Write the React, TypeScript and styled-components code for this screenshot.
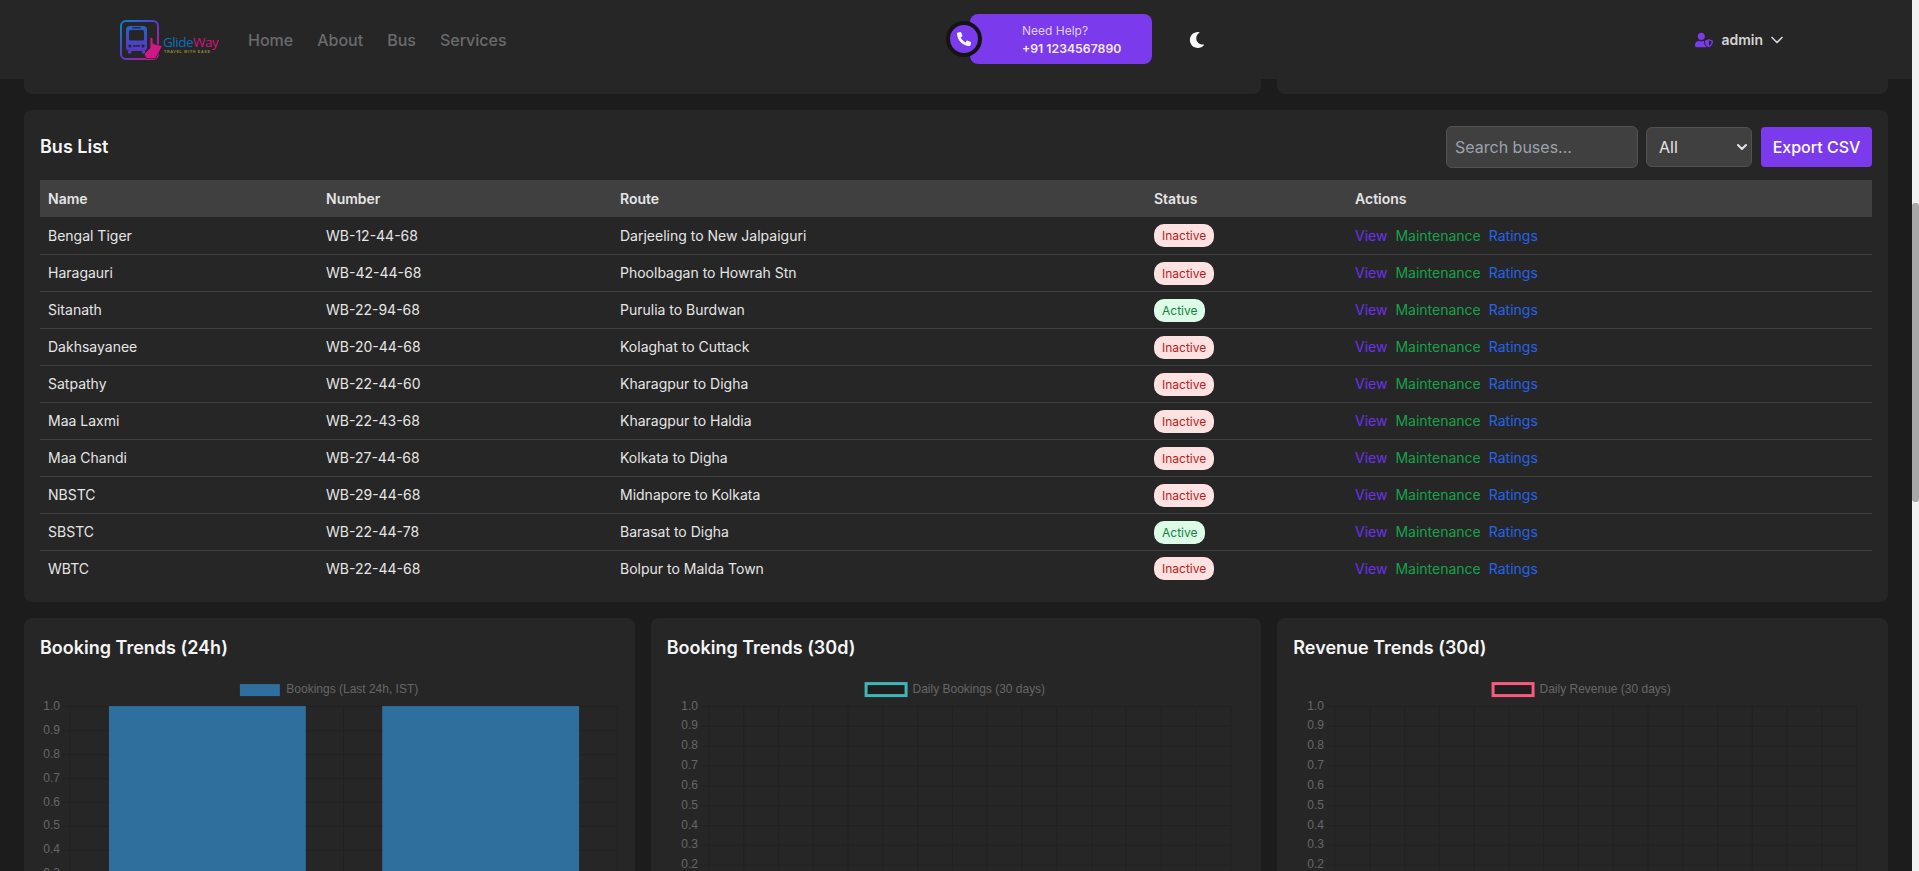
import React from "react";
import styled, { createGlobalStyle } from "styled-components";
import { FaMoon, FaPhoneAlt, FaUserShield } from "react-icons/fa";
import { FiChevronDown } from "react-icons/fi";

const GlobalStyle = createGlobalStyle`
  html, body {
    margin: 0;
    height: 100%;
    overflow: hidden;
    background: #1c1c1c;
  }
  * {
    box-sizing: border-box;
  }
`;

const buses = [
  { name: "Bengal Tiger", number: "WB-12-44-68", route: "Darjeeling to New Jalpaiguri", active: false },
  { name: "Haragauri", number: "WB-42-44-68", route: "Phoolbagan to Howrah Stn", active: false },
  { name: "Sitanath", number: "WB-22-94-68", route: "Purulia to Burdwan", active: true },
  { name: "Dakhsayanee", number: "WB-20-44-68", route: "Kolaghat to Cuttack", active: false },
  { name: "Satpathy", number: "WB-22-44-60", route: "Kharagpur to Digha", active: false },
  { name: "Maa Laxmi", number: "WB-22-43-68", route: "Kharagpur to Haldia", active: false },
  { name: "Maa Chandi", number: "WB-27-44-68", route: "Kolkata to Digha", active: false },
  { name: "NBSTC", number: "WB-29-44-68", route: "Midnapore to Kolkata", active: false },
  { name: "SBSTC", number: "WB-22-44-78", route: "Barasat to Digha", active: true },
  { name: "WBTC", number: "WB-22-44-68", route: "Bolpur to Malda Town", active: false },
];

const ticks = ["1.0", "0.9", "0.8", "0.7", "0.6", "0.5", "0.4", "0.3", "0.2", "0.1", "0.0"];

function Logo() {
  return (
    <svg width="100" height="42" viewBox="0 0 100 42">
      <defs>
        <linearGradient id="logoFrame" x1="0" y1="0" x2="1" y2="1">
          <stop offset="0" stopColor="#0a84c8" />
          <stop offset="0.5" stopColor="#5b3bd0" />
          <stop offset="1" stopColor="#d9117f" />
        </linearGradient>
        <linearGradient id="logoBus" x1="0" y1="0" x2="0" y2="1">
          <stop offset="0" stopColor="#2a62c8" />
          <stop offset="1" stopColor="#5a35c8" />
        </linearGradient>
      </defs>
      <rect x="2" y="2" width="37" height="38" rx="5" fill="none" stroke="url(#logoFrame)" strokeWidth="2" />
      <rect x="7" y="7" width="21" height="25" rx="4" fill="url(#logoBus)" />
      <rect x="10" y="11" width="15" height="10.5" rx="1.5" fill="#262626" />
      <rect x="13" y="8.2" width="9" height="1.4" rx="0.7" fill="#262626" />
      <circle cx="11" cy="27" r="1.6" fill="#262626" />
      <circle cx="24" cy="27" r="1.6" fill="#262626" />
      <rect x="14" y="26.3" width="7" height="1.4" fill="#262626" />
      <rect x="9" y="32" width="3.5" height="2.5" rx="1" fill="#4a48c8" />
      <rect x="23" y="32" width="3.5" height="2.5" rx="1" fill="#4a48c8" />
      <path d="M31 18 L34 19 L34 24.5 L43.5 27 L36.5 39.5 L27 39.5 L25 35 L31 29 Z" fill="#cf1786" stroke="#262626" strokeWidth="0.8" />
      <text x="44" y="27.5" fontFamily="'Open Sans', sans-serif" fontSize="13.5" fontWeight="500" letterSpacing="-0.5" fill="#0a70c4">
        Glide
        <tspan fill="#d4147e">Way</tspan>
      </text>
      <text x="45" y="34" fontFamily="'Liberation Sans', sans-serif" fontSize="3.6" fontWeight="700" letterSpacing="0.72" fill="#a8843c">
        TRAVEL WITH EASE
      </text>
    </svg>
  );
}

type ChartProps = {
  title: string;
  legend: string;
  swatch: string;
  swatchX: number;
  textX: number;
  left: number;
  right: number;
  labelEnd: number;
  step: number;
  columns: number;
  bars?: [number, number][];
  filled?: boolean;
};

function ChartCard({ title, legend, swatch, swatchX, textX, left, right, labelEnd, step, columns, bars, filled }: ChartProps) {
  const top = 32;
  const bottom = top + step * 10;
  const colWidth = (right - left) / columns;
  return (
    <Card>
      <CardTitle>{title}</CardTitle>
      <ChartSvg viewBox="0 0 579 300">
        {filled ? (
          <rect x={swatchX} y={10} width={40} height={12} fill={swatch} />
        ) : (
          <rect x={swatchX} y={9.5} width={40} height={12} fill="#1e1e1e" stroke={swatch} strokeWidth={3} />
        )}
        <ChartText x={textX} y={19}>
          {legend}
        </ChartText>
        {ticks.map((t, i) => (
          <React.Fragment key={t}>
            <GridLine x1={left - 8} x2={right} y1={top + i * step + 0.5} y2={top + i * step + 0.5} />
            <ChartText x={labelEnd} y={top + i * step + 3.5} textAnchor="end">
              {t}
            </ChartText>
          </React.Fragment>
        ))}
        {Array.from({ length: columns + 1 }, (_, i) => (
          <GridLine key={i} x1={left + i * colWidth} x2={left + i * colWidth} y1={top} y2={bottom + 8} />
        ))}
        {bars?.map(([x, w]) => (
          <rect key={x} x={x} y={top} width={w} height={bottom - top} fill="#2f6f9e" />
        ))}
      </ChartSvg>
    </Card>
  );
}

export default function App() {
  return (
    <>
      <GlobalStyle />
      <Shell>
        <Page>
          <Header>
            <LeftGroup>
              <Logo />
              <Nav>
                <NavLink>Home</NavLink>
                <NavLink>About</NavLink>
                <NavLink>Bus</NavLink>
                <NavLink>Services</NavLink>
              </Nav>
            </LeftGroup>
            <Help>
              <PhoneRing>
                <FaPhoneAlt size={14} />
              </PhoneRing>
              <HelpPill>
                <HelpLabel>Need Help?</HelpLabel>
                <HelpNumber>+91 1234567890</HelpNumber>
              </HelpPill>
            </Help>
            <ThemeToggle>
              <FaMoon size={16} />
            </ThemeToggle>
            <UserMenu>
              <FaUserShield size={18} color="#7c3aed" />
              <UserName>admin</UserName>
              <UserChevron>
                <FiChevronDown size={20} />
              </UserChevron>
            </UserMenu>
          </Header>
          <Content>
            <ThreeCols>
              <ClippedCard $span={2} />
              <ClippedCard $span={1} />
            </ThreeCols>
            <Card>
              <ListHead>
                <ListTitle>Bus List</ListTitle>
                <Tools>
                  <SearchInput placeholder="Search buses..." />
                  <SelectWrap>
                    <StatusSelect defaultValue="All">
                      <option>All</option>
                      <option>Active</option>
                      <option>Inactive</option>
                    </StatusSelect>
                    <SelectArrow>
                      <FiChevronDown size={16} strokeWidth={3} />
                    </SelectArrow>
                  </SelectWrap>
                  <ExportButton>Export CSV</ExportButton>
                </Tools>
              </ListHead>
              <Table>
                <thead>
                  <tr>
                    <Th $w={278}>Name</Th>
                    <Th $w={294}>Number</Th>
                    <Th $w={534}>Route</Th>
                    <Th $w={201}>Status</Th>
                    <Th>Actions</Th>
                  </tr>
                </thead>
                <tbody>
                  {buses.map((b) => (
                    <Row key={b.number}>
                      <Td>{b.name}</Td>
                      <Td>{b.number}</Td>
                      <Td>{b.route}</Td>
                      <Td>
                        <Badge $active={b.active}>{b.active ? "Active" : "Inactive"}</Badge>
                      </Td>
                      <Td>
                        <ActionLink $color="#6d32ee">View</ActionLink>
                        <ActionLink $color="#16a34a">Maintenance</ActionLink>
                        <ActionLink $color="#2563eb">Ratings</ActionLink>
                      </Td>
                    </Row>
                  ))}
                </tbody>
              </Table>
            </Card>
            <ThreeCols>
              <ChartCard
                title="Booking Trends (24h)"
                legend="Bookings (Last 24h, IST)"
                swatch="#2f6f9e"
                swatchX={200}
                textX={246.5}
                left={30}
                right={577.5}
                labelEnd={20}
                step={24}
                columns={2}
                bars={[
                  [69, 197],
                  [342.4, 197],
                ]}
                filled
              />
              <ChartCard
                title="Booking Trends (30d)"
                legend="Daily Bookings (30 days)"
                swatch="#3fb5b5"
                swatchX={199.2}
                textX={245.7}
                left={42}
                right={564}
                labelEnd={31}
                step={19.85}
                columns={15}
              />
              <ChartCard
                title="Revenue Trends (30d)"
                legend="Daily Revenue (30 days)"
                swatch="#f7597f"
                swatchX={200.2}
                textX={246.7}
                left={42}
                right={564}
                labelEnd={31}
                step={19.85}
                columns={15}
              />
            </ThreeCols>
          </Content>
        </Page>
        <ScrollTrack>
          <ScrollThumb />
        </ScrollTrack>
      </Shell>
    </>
  );
}

const Shell = styled.div`
  display: flex;
  height: 871px;
  overflow: hidden;
  font-family: Inter, "Liberation Sans", sans-serif;
  color: #e5e5e5;
`;

const Page = styled.div`
  flex: 1;
  min-width: 0;
  display: flex;
  flex-direction: column;
`;

const ScrollTrack = styled.div`
  width: 7px;
  flex-shrink: 0;
  background: #f1f1f1;
  padding-top: 203px;
`;

const ScrollThumb = styled.div`
  height: 299px;
  background: #a8a8a8;
  border-radius: 3px;
`;

const Header = styled.header`
  height: 79px;
  flex-shrink: 0;
  display: flex;
  align-items: center;
  background: #262626;
  padding-right: 125px;
`;

const LeftGroup = styled.div`
  width: 946px;
  padding-left: 119px;
  display: flex;
  align-items: center;
  flex-shrink: 0;
`;

const Nav = styled.nav`
  margin-left: 29px;
  display: flex;
  gap: 24px;
`;

const NavLink = styled.a`
  font-size: 16px;
  font-weight: 500;
  color: #6b6b6b;
`;

const Help = styled.div`
  display: flex;
  align-items: center;
  margin-top: -1px;
`;

const PhoneRing = styled.div`
  width: 36px;
  height: 36px;
  border-radius: 50%;
  border: 4px solid #141414;
  background: #7c3aed;
  color: #fff;
  display: flex;
  align-items: center;
  justify-content: center;
  margin-right: -12px;
  position: relative;
  z-index: 1;
`;

const HelpPill = styled.div`
  width: 182px;
  height: 50px;
  border-radius: 8px;
  background: #7c3aed;
  padding-left: 52px;
  display: flex;
  flex-direction: column;
  justify-content: center;
  gap: 3px;
`;

const HelpLabel = styled.span`
  font-size: 12px;
  line-height: 15px;
  color: #ddd0fa;
`;

const HelpNumber = styled.span`
  font-size: 12.25px;
  line-height: 15px;
  font-weight: 600;
  color: #f0eafe;
`;

const ThemeToggle = styled.div`
  margin-left: 37px;
  display: flex;
  color: #fafafa;
`;

const UserMenu = styled.div`
  margin-left: auto;
  display: flex;
  align-items: center;
  gap: 8px;
`;

const UserName = styled.span`
  font-size: 14px;
  font-weight: 600;
  color: #d4d4d4;
`;

const UserChevron = styled.span`
  display: flex;
  margin-left: -4px;
  color: #d4d4d4;
`;

const Content = styled.main`
  flex: 1;
  min-height: 0;
  overflow: hidden;
  padding: 0 24px;
  display: flex;
  flex-direction: column;
  gap: 16px;
`;

const ThreeCols = styled.div`
  display: grid;
  grid-template-columns: repeat(3, minmax(0, 1fr));
  gap: 16px;
  flex-shrink: 0;
`;

const Card = styled.section`
  background: #262626;
  border-radius: 8px;
  padding: 16px;
  flex-shrink: 0;
`;

const ClippedCard = styled.div<{ $span: number }>`
  grid-column: span ${(p) => p.$span};
  height: 15px;
  background: #262626;
  border-radius: 0 0 8px 8px;
`;

const ListHead = styled.div`
  display: flex;
  align-items: center;
  justify-content: space-between;
  margin-bottom: 12px;
`;

const ListTitle = styled.h2`
  margin: 0;
  font-size: 18px;
  line-height: 28px;
  font-weight: 600;
  color: #f5f5f5;
`;

const CardTitle = styled(ListTitle)`
  margin-bottom: 12px;
`;

const Tools = styled.div`
  display: flex;
  align-items: center;
  gap: 8px;
`;

const SearchInput = styled.input`
  width: 192px;
  height: 42px;
  padding: 8px;
  background: #404040;
  border: 1px solid #525252;
  border-radius: 6px;
  font: 400 16px Inter, sans-serif;
  color: #e5e5e5;
  &::placeholder {
    color: #9ca3af;
    opacity: 1;
  }
`;

const SelectWrap = styled.div`
  position: relative;
  width: 106px;
  height: 40px;
`;

const StatusSelect = styled.select`
  appearance: none;
  width: 100%;
  height: 100%;
  padding: 0 12px;
  background: #404040;
  border: 1px solid #525252;
  border-radius: 6px;
  font: 400 16px Inter, sans-serif;
  color: #e5e5e5;
`;

const SelectArrow = styled.span`
  position: absolute;
  right: 2px;
  top: 12px;
  display: flex;
  color: #e5e5e5;
  pointer-events: none;
`;

const ExportButton = styled.button`
  width: 111px;
  height: 40px;
  margin-left: 1px;
  padding: 0;
  border: 0;
  border-radius: 4px;
  background: #7c3aed;
  color: #fff;
  font: 500 16px Inter, sans-serif;
`;

const Table = styled.table`
  width: 100%;
  border-collapse: collapse;
  table-layout: fixed;
  font-size: 14px;
`;

const Th = styled.th<{ $w?: number }>`
  width: ${(p) => (p.$w ? `${p.$w}px` : "auto")};
  height: 37px;
  padding: 0 8px;
  background: #404040;
  text-align: left;
  font-weight: 600;
  color: #e5e5e5;
`;

const Row = styled.tr`
  height: 37px;
  border-bottom: 1px solid #404040;
  &:last-child {
    border-bottom: 0;
    height: 36px;
  }
`;

const Td = styled.td`
  padding: 0 8px;
  color: #e5e5e5;
`;

const Badge = styled.span<{ $active: boolean }>`
  display: inline-block;
  height: 23px;
  margin-top: 1px;
  padding: 0 8px;
  border-radius: 10px;
  font-size: 12px;
  line-height: 23px;
  vertical-align: middle;
  background: ${(p) => (p.$active ? "#dcfce7" : "#fee2e2")};
  color: ${(p) => (p.$active ? "#15803d" : "#b91c1c")};
`;

const ActionLink = styled.a<{ $color: string }>`
  margin-right: 8px;
  color: ${(p) => p.$color};
`;

const ChartSvg = styled.svg`
  display: block;
  width: 100%;
  height: 300px;
`;

const ChartText = styled.text`
  font-family: "Liberation Sans", Arial, sans-serif;
  font-size: 12px;
  fill: #666;
`;

const GridLine = styled.line`
  stroke: #222222;
  stroke-width: 1;
`;
